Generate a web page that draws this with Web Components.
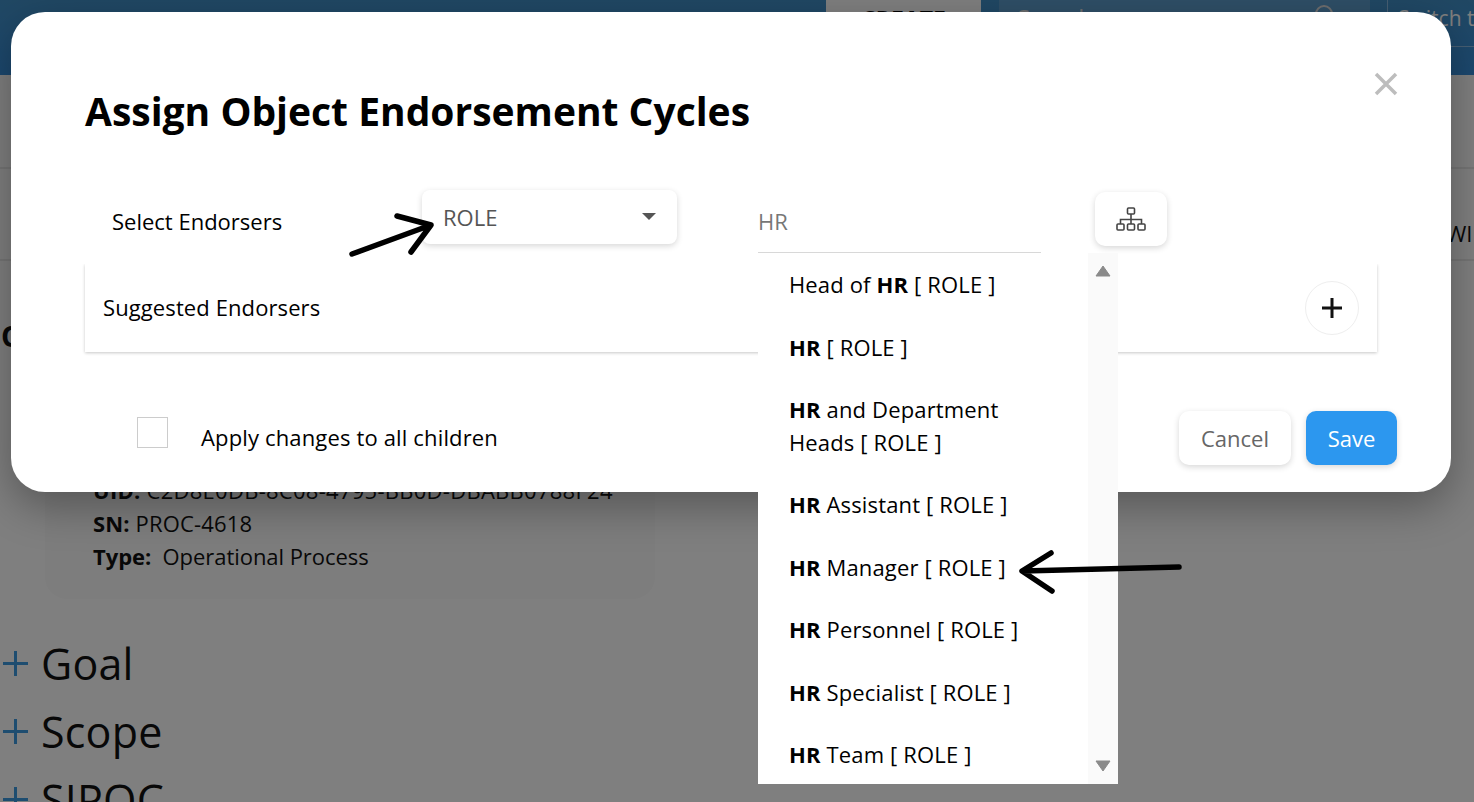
<!DOCTYPE html>
<html><head><meta charset="utf-8"><title>Assign Object Endorsement Cycles</title>
<style>
html,body{margin:0;padding:0;height:802px;overflow:hidden;background:#fff}
body{font-family:"Open Sans","Noto Sans",sans-serif;color:#111;position:relative}
</style></head>
<body>
<app-background></app-background>
<endorse-dialog></endorse-dialog>
<script>
const def=(name,html)=>customElements.define(name,class extends HTMLElement{
  constructor(){super();this.attachShadow({mode:'open'}).innerHTML=html;}
});
const FONT='font-family:"Open Sans","Noto Sans",sans-serif;';

def('top-bar',`<style>
:host{display:flex;height:75px;background:linear-gradient(#4290c8,#3890de);color:#fff;${FONT}justify-content:flex-end;align-items:flex-start;overflow:hidden}
.create{width:155px;height:60px;background:#fff;color:#000;font-weight:700;font-size:23px;text-align:center;line-height:38px;margin-right:18px}
.search{width:371px;height:60px;background:#5f9ecf;margin-right:17px;display:flex;justify-content:space-between;padding:0 34px 0 18px;box-sizing:border-box;font-size:24px;line-height:36px;color:#ddd}
.search svg{margin-top:4px}
.switch{width:87px;height:47px;border-left:1px solid #8fbfe6;border-bottom:1px solid #8fbfe6;font-size:21px;line-height:36px;padding-left:10px;white-space:nowrap;overflow:hidden;box-sizing:border-box;color:#fff}
</style>
<div class="create">CREATE</div>
<div class="search"><span>Search</span><svg width="24" height="24" viewBox="0 0 24 24" fill="none" stroke="#ddd" stroke-width="2"><circle cx="12" cy="10" r="8"/><path d="M18 16l5 6"/></svg></div>
<div class="switch">Switch to</div>`);

def('tab-strip',`<style>
:host{display:block;height:92px;box-sizing:content-box;border-bottom:2px solid #eaeaea;${FONT}font-size:22px;white-space:nowrap;overflow:hidden;padding-left:1446px;line-height:132px;margin-bottom:-2px}
</style><slot></slot>`);

def('info-card',`<style>
:host{display:block;width:610px;box-sizing:border-box;margin-left:45px;background:#fafafa;border-radius:22px;padding:115px 48px 26px;${FONT}font-size:22px;line-height:33px;color:#111}
::slotted(div){white-space:pre}
</style><slot></slot>`);

def('fold-section',`<style>
:host{display:flex;align-items:center;height:68px;${FONT}font-size:43px;letter-spacing:.2px;color:#111;gap:11px;padding-left:1px}
svg{flex:none}
</style><svg width="29" height="29" viewBox="0 0 29 29" stroke="#3c9be0" stroke-width="3"><path d="M14.5 2v25M2 14.5h25"/></svg><slot></slot>`);

def('app-background',`<style>
:host{display:block;height:802px;overflow:hidden;background:#fff}
.heading{font:700 29px "Open Sans",sans-serif;padding:57px 0 0 1px;height:100px;box-sizing:border-box;color:#111}
.sections{margin-top:30px}
</style>
<top-bar></top-bar>
<tab-strip></tab-strip>
<tab-strip>WIKI</tab-strip>
<div class="heading">Object</div>
<info-card>
<div style="letter-spacing:.27px"><b>UID:</b> C2D8E0DB-8C08-4795-BB0D-DBABB0788F24</div>
<div style="letter-spacing:.15px"><b>SN:</b> PROC-4618</div>
<div style="letter-spacing:-.05px"><b>Type:</b>  Operational Process</div>
</info-card>
<div class="sections"><fold-section>Goal</fold-section><fold-section>Scope</fold-section><fold-section>SIPOC</fold-section></div>`);

def('select-box',`<style>
:host{display:flex;justify-content:space-between;box-sizing:border-box;width:255px;height:54px;background:#fff;border-radius:8px;box-shadow:0 2px 6px rgba(0,0,0,.16);padding:0 21px 0 21px;align-items:center;color:#555;font-size:22px}
i{width:0;height:0;border:7px solid transparent;border-top:7px solid #555;border-bottom:0;margin-top:-2px}
</style><slot></slot><i></i>`);

def('icon-button',`<style>
:host{display:flex;align-items:center;justify-content:center;box-sizing:border-box;width:72px;height:54px;background:#fff;border-radius:10px;box-shadow:0 2px 6px rgba(0,0,0,.16)}
</style><svg width="30" height="24" viewBox="0 0 30 24" fill="none" stroke="#444" stroke-width="1.6"><rect x="11.5" y="1" width="7" height="6" rx="1"/><path d="M15 7v5.5M4.500 17v-4.500h21V17M15 12.500V17"/><rect x="1" y="17" width="7" height="6" rx="1"/><rect x="11.5" y="17" width="7" height="6" rx="1"/><rect x="22" y="17" width="7" height="6" rx="1"/></svg>`);

def('role-item',`<style>
:host{display:block;padding:14.7px 60px 14.7px 31px;line-height:33px;font-size:22px;letter-spacing:.15px;color:#000}
::slotted(b){font-weight:700}
</style><slot></slot>`);

def('role-list',`<style>
:host{position:absolute;left:0;top:63px;width:360px;height:531px;background:#fff;display:flex;overflow:hidden;z-index:3}
.items{width:330px;flex:none;box-sizing:border-box;padding-top:.6px}
.bar{width:30px;background:#fafafa;display:flex;flex-direction:column;justify-content:space-between;align-items:center;padding:12px 0;box-sizing:border-box}
.bar svg{display:block}
</style><div class="items"><slot></slot></div>
<div class="bar"><svg width="16" height="12" viewBox="0 0 16 12"><path d="M8 1L15 11H1z" fill="#8a8a8a" stroke="#8a8a8a" stroke-linejoin="round"/></svg><svg width="16" height="12" viewBox="0 0 16 12"><path d="M8 11L15 1H1z" fill="#8a8a8a" stroke="#8a8a8a" stroke-linejoin="round"/></svg></div>`);

def('role-search',`<style>
:host{display:block;position:relative;width:283px;height:63px}
.f{height:63px;box-sizing:border-box;border-bottom:1px solid #d8d8d8;padding:13px 0 0 0;font-size:22px;line-height:36px;color:#777}
</style><div class="f">HR</div>
<role-list>
<role-item>Head of <b>HR</b> [ ROLE ]</role-item>
<role-item><b>HR</b> [ ROLE ]</role-item>
<role-item><b>HR</b> and Department Heads [ ROLE ]</role-item>
<role-item><b>HR</b> Assistant [ ROLE ]</role-item>
<role-item><b>HR</b> Manager [ ROLE ]</role-item>
<role-item><b>HR</b> Personnel [ ROLE ]</role-item>
<role-item><b>HR</b> Specialist [ ROLE ]</role-item>
<role-item><b>HR</b> Team [ ROLE ]</role-item>
</role-list>`);

def('suggest-panel',`<style>
:host{display:flex;align-items:center;justify-content:space-between;height:88px;box-sizing:border-box;padding:0 18px;background:#fff;box-shadow:0 1px 3px rgba(0,0,0,.22);font-size:22px;letter-spacing:.1px;color:#000;clip-path:inset(0 -6px -6px -6px)}
span{margin-top:-2px}
.p{width:54px;height:54px;border-radius:50%;border:1px solid #eee;box-sizing:border-box;display:flex;align-items:center;justify-content:center}
</style><span><slot></slot></span><div class="p"><svg width="22" height="22" viewBox="0 0 22 22" stroke="#111" stroke-width="3"><path d="M11 1v20M1 11h20"/></svg></div>`);

def('action-button',`<style>
:host{display:flex;align-items:center;justify-content:center;height:54px;box-sizing:border-box;border-radius:10px;font-size:22px;box-shadow:0 2px 6px rgba(0,0,0,.16);background:#fff;color:#666}
:host([primary]){background:#2c97ef;color:#fff}
</style><slot></slot>`);

def('endorse-dialog',`<style>
:host{position:absolute;inset:0;background:rgba(0,0,0,.5);display:block;${FONT}}
.modal{position:absolute;left:11px;top:12px;width:1440px;height:480px;background:#fff;border-radius:34px;box-shadow:0 14px 44px rgba(0,0,0,.32);box-sizing:border-box;padding:0 74px;color:#000}
.close{position:absolute;right:53px;top:60px;display:block}
h1{margin:0;padding-top:73px;height:178px;box-sizing:border-box;font-size:39px;line-height:52px;font-weight:700}
.row{display:flex;align-items:flex-start;height:74px;margin-left:27px;font-size:22px}
.lab{width:310px;padding-top:13px;line-height:36px}
select-box{margin-right:81px}
icon-button{margin-left:54px;margin-top:2px}
.foot{display:flex;align-items:center;margin-top:59px;height:54px}
.check{width:31px;height:31px;border:1px solid #ccc;box-sizing:border-box;margin:-12px 33px 0 52px}
.foot span{font-size:22px;letter-spacing:.15px;flex:1;margin-top:-2px}
.cancel{width:112px;margin-right:15px}.save{width:91px;margin-right:-20px}
</style>
<div class="modal">
<svg class="close" width="24" height="24" viewBox="0 0 24 24" stroke="#bdbdbd" stroke-width="3.500"><path d="M2 2l20 20M22 2L2 22"/></svg>
<h1>Assign Object Endorsement Cycles</h1>
<div class="row"><div class="lab">Select Endorsers</div><select-box>ROLE</select-box><role-search></role-search><icon-button></icon-button></div>
<suggest-panel>Suggested Endorsers</suggest-panel>
<div class="foot"><div class="check"></div><span>Apply changes to all children</span><action-button class="cancel">Cancel</action-button><action-button class="save" primary>Save</action-button></div>
</div>
<svg style="position:absolute;left:0;top:0;z-index:5;pointer-events:none" width="1474" height="802" fill="none" stroke="#000" stroke-width="5.500" stroke-linecap="round" stroke-linejoin="round">
<path d="M352 254L431 225M397 216L431 225L411 252"/>
<path d="M1179 567L1023 571M1051 553L1022 571L1052 591"/>
</svg>`);
</script>
</body></html>
